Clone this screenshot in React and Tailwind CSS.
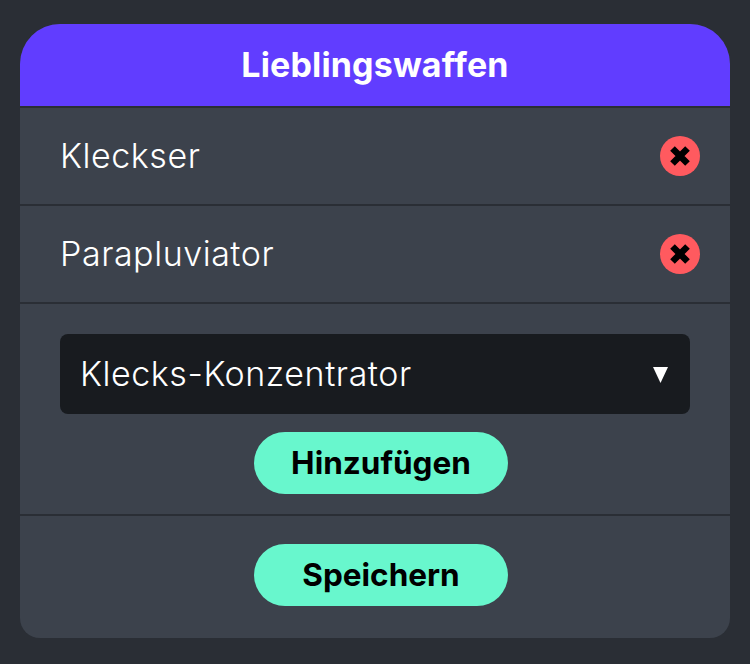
import React from "react";

const weapons = ["Kleckser", "Parapluviator"];

function RemoveIcon() {
  return (
    <button className="flex h-10 w-10 items-center justify-center rounded-full bg-[#ff5a5f]">
      <svg className="h-6 w-6" viewBox="0 0 24 24" fill="none" stroke="#000" strokeWidth="6.5">
        <path d="M4.5 4.5L19.5 19.5M19.5 4.5L4.5 19.5" />
      </svg>
    </button>
  );
}

function App() {
  return (
    <div className="min-h-[664px] bg-[#2a2e35] px-5 pt-6 pb-[26px] font-['Inter',sans-serif] text-white">
      <div className="overflow-hidden rounded-t-[40px] rounded-b-[20px] bg-[#3c424c]">
        <h1 className="flex h-[82px] items-center justify-center bg-[#613dff] pb-0.5 text-[34px] font-bold tracking-[0.15px]">
          Lieblingswaffen
        </h1>
        {weapons.map((name) => (
          <div
            key={name}
            className="flex h-[98px] items-center justify-between border-t-2 border-[#2a2e35] pr-[30px] pl-10 text-[34px] font-light tracking-[0.55px]"
          >
            <span className="pb-0.5">{name}</span>
            <RemoveIcon />
          </div>
        ))}
        <div className="flex flex-col items-center border-t-2 border-[#2a2e35] pt-[30px] pb-5">
          <div className="mb-[18px] flex h-20 w-[630px] items-center justify-between rounded-lg bg-[#181b1f] pr-[22px] pl-5 text-[34px] font-light tracking-[0.55px]">
            <span className="pb-0.5">Klecks-Konzentrator</span>
            <svg className="mt-0.5 h-4 w-[15px]" viewBox="0 0 15 16" fill="#fff">
              <path d="M0 0H15L7.5 16Z" />
            </svg>
          </div>
          <button className="ml-3 h-[62px] w-[254px] rounded-full bg-[#68f7cd] text-[31.5px] font-bold text-black">
            Hinzufügen
          </button>
        </div>
        <div className="flex justify-center border-t-2 border-[#2a2e35] pt-7 pb-8">
          <button className="ml-3 h-[62px] w-[254px] rounded-full bg-[#68f7cd] text-[31.5px] font-bold text-black">
            Speichern
          </button>
        </div>
      </div>
    </div>
  );
}

export default App;
